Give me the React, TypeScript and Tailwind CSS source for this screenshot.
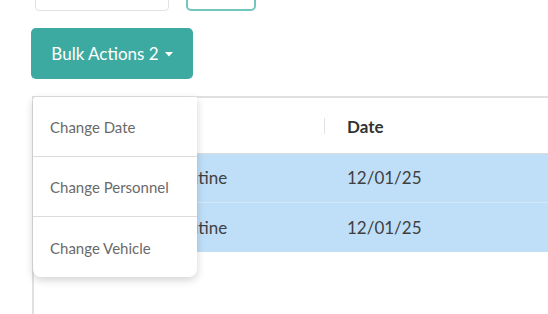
import React from 'react';

const rows = [
  { type: 'Routine', date: '12/01/25' },
  { type: 'Routine', date: '12/01/25' },
];

const menuItems = ['Change Date', 'Change Personnel', 'Change Vehicle'];

export default function App() {
  return (
    <div
      className="relative h-[314px] w-[548px] overflow-hidden bg-white"
      style={{ fontFamily: 'Lato, "Open Sans", sans-serif' }}
    >
      <div className="-mt-[24px] flex items-end pl-[35px]">
        <div className="h-[35px] w-[134px] rounded-[4px] border border-[#e2e2e2]" />
        <div className="ml-[17px] h-[34px] w-[70px] rounded-[5px] border-2 border-[#72c6bd]" />
      </div>

      <button className="ml-[31px] mt-[17px] flex h-[51px] w-[162px] items-center justify-center gap-[6px] rounded-[5px] bg-[#3caaa0] text-[17px] text-white">
        <span>Bulk Actions 2</span>
        <svg width="8" height="5" viewBox="0 0 8 5" className="mt-[2px]">
          <path d="M0 0 L8 0 L4 4.5 Z" fill="#ffffff" />
        </svg>
      </button>

      <div className="relative ml-[32px] mt-[17px] h-[300px] border-l-2 border-t-2 border-[#e0e0e3]">
        <div className="flex h-[56px] items-center border-b border-[#dcdcdc] text-[17px] font-bold text-[#333]">
          <div className="w-[290px]" />
          <div className="h-[16px] border-l border-[#dfe3ea]" />
          <div className="pl-[22px] pt-[2px]">Date</div>
        </div>
        {rows.map((r, i) => (
          <div
            key={i}
            className={`flex h-[49px] items-center bg-[#bfdff8] text-[17px] text-[#404040] ${i === 0 ? 'border-b border-[#d3e9fa]' : ''}`}
          >
            <div className="w-[291px] pl-[135px]">{r.type}</div>
            <div className="pl-[22px]">{r.date}</div>
          </div>
        ))}

        <div className="absolute left-[-1px] top-[-1px] w-[164px] rounded-b-[8px] rounded-tl-[3px] bg-white shadow-[0_3px_8px_rgba(0,0,0,0.18)]">
          {menuItems.map((m, i) => (
            <div
              key={m}
              className={`flex h-[60px] items-center pl-[17px] pt-[2px] text-[15px] text-[#6a6a6a] ${i < menuItems.length - 1 ? 'border-b border-[#dcdcdc]' : ''}`}
            >
              {m}
            </div>
          ))}
        </div>
      </div>
    </div>
  );
}
